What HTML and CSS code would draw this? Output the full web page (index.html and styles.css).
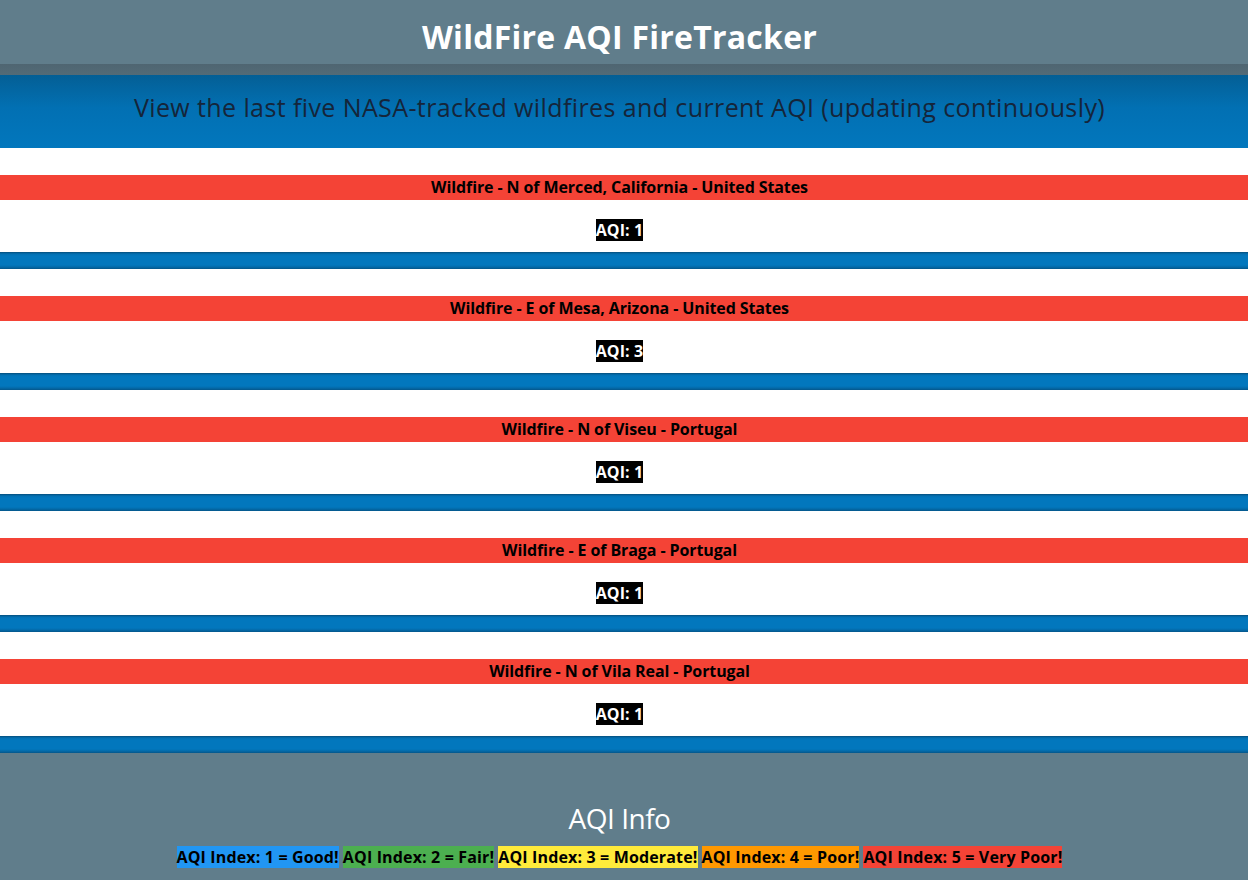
FILE: index.html
```html
<!DOCTYPE html>
<html>
<head>
<meta charset="utf-8">
<link rel="stylesheet" href="styles.css">
</head>
<body>
<header class="top">
  <h1 class="title">WildFire AQI FireTracker</h1>
</header>
<div class="shade"></div>
<section class="intro">
  <p class="subtitle">View the last five NASA-tracked wildfires and current AQI (updating continuously)</p>
</section>
<main class="list">
  <div class="card">
    <div class="fire">Wildfire - N of Merced, California - United States</div>
    <div class="aqi-row"><span class="aqi">AQI: 1</span></div>
    <div class="sep"></div>
  </div>
  <div class="card">
    <div class="fire">Wildfire - E of Mesa, Arizona - United States</div>
    <div class="aqi-row"><span class="aqi">AQI: 3</span></div>
    <div class="sep"></div>
  </div>
  <div class="card">
    <div class="fire">Wildfire - N of Viseu - Portugal</div>
    <div class="aqi-row"><span class="aqi">AQI: 1</span></div>
    <div class="sep"></div>
  </div>
  <div class="card">
    <div class="fire">Wildfire - E of Braga - Portugal</div>
    <div class="aqi-row"><span class="aqi">AQI: 1</span></div>
    <div class="sep"></div>
  </div>
  <div class="card">
    <div class="fire">Wildfire - N of Vila Real - Portugal</div>
    <div class="aqi-row"><span class="aqi">AQI: 1</span></div>
    <div class="sep"></div>
  </div>
</main>
<footer class="info">
  <h2 class="info-title">AQI Info</h2>
  <div class="legend">
    <span class="lg lg-1">AQI Index: 1 = Good!</span>
    <span class="lg lg-2">AQI Index: 2 = Fair!</span>
    <span class="lg lg-3">AQI Index: 3 = Moderate!</span>
    <span class="lg lg-4">AQI Index: 4 = Poor!</span>
    <span class="lg lg-5">AQI Index: 5 = Very Poor!</span>
  </div>
</footer>
</body>
</html>
```
FILE: styles.css
```css
* { box-sizing: border-box; }
html, body { margin: 0; padding: 0; }
body {
  font-family: "Open Sans", "Noto Sans", sans-serif;
  background: #ffffff;
  color: #000;
}
.top {
  height: 64px;
  background: #607d8b;
  display: flex;
  align-items: center;
  justify-content: center;
  padding-right: 9px;
}
.title {
  margin: 0;
  margin-top: 8px;
  color: #fff;
  font-size: 32px;
  font-weight: 700;
  letter-spacing: 0.25px;
}
.shade {
  height: 11px;
  background: linear-gradient(#4f6571, #536b77);
}
.intro {
  height: 73px;
  background: linear-gradient(#045f95 0%, #0270b3 45%, #0277bd 100%);
  display: flex;
  align-items: center;
  justify-content: center;
  padding-bottom: 10px;
  padding-right: 9px;
}
.subtitle {
  margin: 0;
  color: #15253a;
  font-size: 25px;
  font-weight: 400;
  letter-spacing: 0.4px;
}
.list { padding: 0; }
.card {
  padding-top: 27px;
  display: flex;
  flex-direction: column;
}
.fire {
  height: 25px;
  background: #f44336;
  text-align: center;
  font-weight: 700;
  font-size: 16px;
  line-height: 25px;
  letter-spacing: -0.1px;
  padding-right: 9px;
}
.aqi-row {
  height: 52px;
  display: flex;
  justify-content: center;
  padding-top: 19px;
  padding-right: 9px;
}
.aqi {
  background: #000;
  color: #fff;
  font-weight: 700;
  font-size: 16px;
  height: 22px;
  line-height: 22px;
  letter-spacing: 0.1px;
}
.sep {
  height: 17px;
  background: linear-gradient(#054e7c 0px, #0370b2 2px, #0277bd 4px, #0277bd 13px, #036aa9 15px, #04568a 17px);
}
.info {
  height: 127px;
  background: #607d8b;
  text-align: center;
  padding-top: 46px;
  padding-right: 9px;
}
.info-title {
  margin: 0;
  color: #fff;
  font-size: 28px;
  font-weight: 400;
  line-height: 38px;
  letter-spacing: -0.5px;
}
.legend {
  margin-top: 9px;
  display: flex;
  justify-content: center;
  gap: 4px;
}
.lg {
  font-size: 16px;
  font-weight: 700;
  height: 22px;
  line-height: 22px;
  letter-spacing: 0.15px;
  color: #000;
}
.lg-1 { background: #2196f3; }
.lg-2 { background: #4caf50; }
.lg-3 { background: #ffeb3b; }
.lg-4 { background: #ff9800; }
.lg-5 { background: #f44336; }
```
